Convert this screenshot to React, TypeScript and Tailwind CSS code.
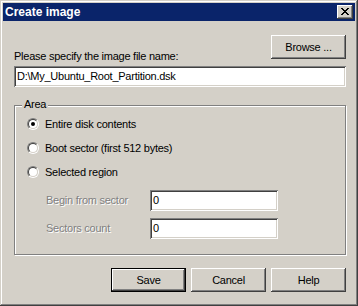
import React from 'react';

// Win2000 classic "Create image" dialog

const raised =
  'shadow-[inset_-1px_-1px_#404040,inset_1px_1px_#fff,inset_-2px_-2px_#808080,inset_2px_2px_#d4d0c8]';
const sunken =
  'shadow-[inset_1px_1px_#808080,inset_-1px_-1px_#fff,inset_2px_2px_#404040,inset_-2px_-2px_#d4d0c8]';

function Button({ label, isDefault }: { label: string; isDefault?: boolean }) {
  if (isDefault) {
    return (
      <div className="w-[75px] h-[24px] border border-black bg-[#d4d0c8]">
        <div className="w-full h-full flex items-center justify-center shadow-[inset_-1px_-1px_#404040,inset_1px_1px_#fff,inset_-2px_-2px_#808080]">
          {label}
        </div>
      </div>
    );
  }
  return (
    <div className={`w-[75px] h-[24px] flex items-center justify-center bg-[#d4d0c8] ${raised}`}>
      {label}
    </div>
  );
}

function Radio({ label, checked }: { label: string; checked?: boolean }) {
  return (
    <div className="h-[24px] flex items-center pl-[12px] gap-[6px]">
      <div className="w-[12px] h-[12px] rounded-full border border-t-[#808080] border-l-[#808080] border-b-white border-r-white">
        <div className="w-full h-full rounded-full border border-t-[#404040] border-l-[#404040] border-b-[#d4d0c8] border-r-[#d4d0c8] bg-white flex items-center justify-center">
          {checked && <div className="w-[4px] h-[4px] rounded-full bg-black" />}
        </div>
      </div>
      <span>{label}</span>
    </div>
  );
}

function TextBox({ value, className }: { value: string; className?: string }) {
  return (
    <div className={`h-[21px] bg-white flex items-center pl-[3px] ${sunken} ${className ?? ''}`}>
      {value}
    </div>
  );
}

export default function App() {
  return (
    <div className="w-[358px] h-[306px] bg-[#d4d0c8] p-[3px] flex flex-col font-['Liberation_Sans',Arial,sans-serif] text-[11px] leading-[13px] tracking-[-0.25px] text-black shadow-[inset_-1px_-1px_#404040,inset_1px_1px_#d4d0c8,inset_-2px_-2px_#808080,inset_2px_2px_#fff]">
      {/* title bar */}
      <div className="h-[18px] bg-[#0a246a] flex items-center justify-between pl-[2px] pr-[2px]">
        <span className="text-white font-bold text-[12px] tracking-normal">Create image</span>
        <div className={`w-[16px] h-[14px] bg-[#d4d0c8] ${raised}`}>
          <svg width="16" height="14" viewBox="0 0 16 14" shapeRendering="crispEdges">
            <path
              fill="#000"
              d="M4 3h2v1h-2z M10 3h2v1h-2z M5 4h2v1h-2z M9 4h2v1h-2z M6 5h4v1h-4z M7 6h2v1h-2z M6 7h4v1h-4z M5 8h2v1h-2z M9 8h2v1h-2z M4 9h2v1h-2z M10 9h2v1h-2z"
            />
          </svg>
        </div>
      </div>

      {/* body */}
      <div className="flex-1 flex flex-col pl-[11px] pr-[9px]">
        <div className="mt-[14px] h-[24px] flex items-end justify-between">
          <span className="mb-[-4px]">Please specify the image file name:</span>
          <Button label="Browse ..." />
        </div>
        <TextBox value="D:\My_Ubuntu_Root_Partition.dsk" className="mt-[7px] w-full" />

        {/* Area group */}
        <div className="mt-[18px] h-[150px] border border-[#808080] shadow-[inset_1px_1px_#fff,1px_1px_#fff] flex flex-col">
          <span className="self-start ml-[7px] mt-[-8px] px-[2px] bg-[#d4d0c8]">Area</span>
          <div className="mt-[1px] flex flex-col">
            <Radio label="Entire disk contents" checked />
            <Radio label="Boot sector (first 512 bytes)" />
            <Radio label="Selected region" />
          </div>
          <div className="mt-[6px] flex items-center pl-[31px]">
            <span className="w-[104px] text-[#808080] [text-shadow:1px_1px_0_#fff]">Begin from sector</span>
            <TextBox value="0" className="w-[128px]" />
          </div>
          <div className="mt-[7px] flex items-center pl-[31px]">
            <span className="w-[104px] text-[#808080] [text-shadow:1px_1px_0_#fff]">Sectors count</span>
            <TextBox value="0" className="w-[128px]" />
          </div>
        </div>

        <div className="mt-[13px] flex justify-end gap-[5px]">
          <Button label="Save" isDefault />
          <Button label="Cancel" />
          <Button label="Help" />
        </div>
      </div>
    </div>
  );
}
